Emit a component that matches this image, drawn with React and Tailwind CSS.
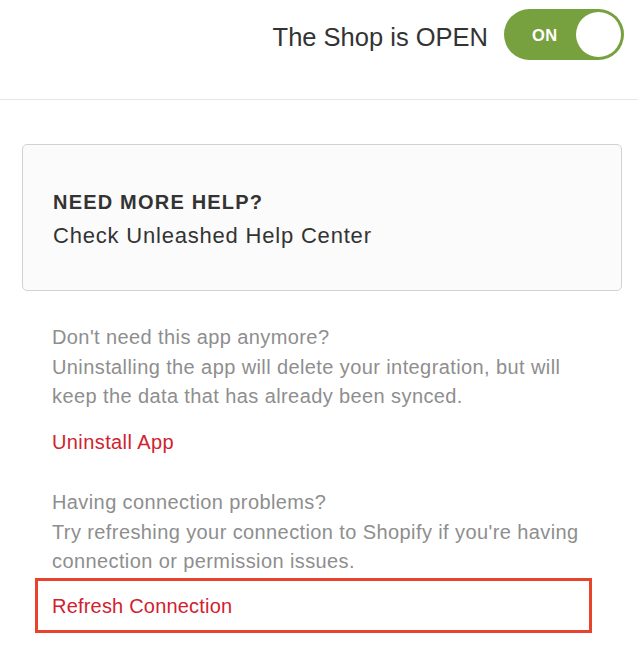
export default function App() {
  const font = { fontFamily: '"Liberation Sans", Arial, sans-serif' };
  return (
    <div className="w-[638px] h-[664px] bg-white overflow-hidden" style={font}>
      <div className="h-[100px] border-b border-[#e6e6e6] flex items-start justify-end pt-[9px] pr-[14px]">
        <span className="mt-[13px] text-[25.5px] leading-[30px] text-[#333333] mr-[16px]">The Shop is OPEN</span>
        <div className="w-[120px] h-[51px] rounded-full bg-[#77a13e] flex items-center justify-between pl-[28px] pr-[3px]">
          <span className="text-white text-[16.5px] font-bold tracking-[0.5px] leading-[20px]">ON</span>
          <div className="w-[45px] h-[45px] rounded-full bg-white"></div>
        </div>
      </div>
      <div className="pl-[22px] pr-[16px] pt-[44px]">
        <div className="h-[147px] rounded-[5px] border border-[#cfd3d7] bg-[#fbfbfb] pl-[30px] pt-[43px]">
          <div className="text-[20px] font-bold text-[#333333] leading-[28px] tracking-[1.2px]">NEED MORE HELP?</div>
          <div className="text-[22px] text-[#333333] leading-[30px] mt-[5px] tracking-[0.8px]">Check Unleashed Help Center</div>
        </div>
        <div className="pl-[30px] pt-[32px] text-[20px] text-[#8e8e8e] leading-[29.5px] tracking-[0.4px]">
          <div>Don't need this app anymore?</div>
          <div>Uninstalling the app will delete your integration, but will</div>
          <div>keep the data that has already been synced.</div>
        </div>
        <div className="pl-[30px] pt-[16px] text-[20px] text-[#d1222f] leading-[29.5px] tracking-[0.4px]">Uninstall App</div>
        <div className="pl-[30px] pt-[31px] text-[20px] text-[#8e8e8e] leading-[29.5px] tracking-[0.4px]">
          <div>Having connection problems?</div>
          <div>Try refreshing your connection to Shopify if you're having</div>
          <div>connection or permission issues.</div>
        </div>
        <div className="ml-[13px] mt-[1px] w-[557px] h-[55px] border-[3px] border-[#e8432d] pl-[14px] pt-[11px]">
          <span className="block text-[20px] text-[#d1222f] leading-[29.5px] tracking-[0.2px]">Refresh Connection</span>
        </div>
      </div>
    </div>
  );
}
